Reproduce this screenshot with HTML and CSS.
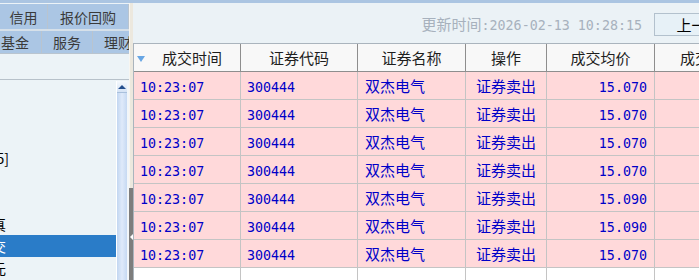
FILE: index.html
```html
<!DOCTYPE html>
<html lang="zh-CN">
<head>
    <meta charset="UTF-8">
    <title>当日成交</title>
    <link rel="stylesheet" href="styles.css">
</head>
<body>
<div id="topbar"></div>
<div id="container">
    <div id="sidebar">
        <div class="tabrow tabrow1">
            <span class="tab tab-credit">信用</span>
            <span class="tab tab-repo">报价回购</span>
        </div>
        <div class="tabrow tabrow2">
            <span class="tab">基金</span>
            <span class="tab">服务</span>
            <span class="tab">理财</span>
        </div>
        <div class="sidebar-gap"></div>
        <div id="treebox">
            <ul class="tree">
                <li><span class="label out">买入[F1]</span></li>
                <li><span class="label out">卖出[F2]</span></li>
                <li><span class="label out">撤单[F3]</span></li>
                <li><span class="label wide">新股申购[F5]</span></li>
                <li><span class="label out">资金股票</span></li>
                <li><span class="label out">当日委托</span></li>
                <li><span class="label">账户仿真</span></li>
                <li class="selected"><span class="label">当日成交</span></li>
                <li><span class="label">交易单元</span></li>
            </ul>
            <div class="vscroll"><span class="vscroll-up"></span></div>
        </div>
    </div>
    <div id="splitter">
        <div class="splitter-top"></div>
        <div class="splitter-handle"></div>
    </div>
    <div id="content">
        <div id="toolbar">
            <span class="updated">更新时间<span class="mono">:2026-02-13 10:28:15</span></span>
            <span class="btn">上一页</span>
        </div>
        <div class="gridwrap">
            <table class="grid">
                <thead>
                <tr>
                    <th class="w1"><span class="sort"></span>成交时间</th>
                    <th class="w2">证券代码</th>
                    <th class="w3">证券名称</th>
                    <th class="w4">操作</th>
                    <th class="w5">成交均价</th>
                    <th class="w6">成交数量</th>
                </tr>
                </thead>
                <tbody>
                <tr>
                    <td class="mono">10:23:07</td><td class="mono">300444</td><td class="name">双杰电气</td>
                    <td class="op">证券卖出</td><td class="mono num">15.070</td><td class="mono num">100</td>
                </tr>
                <tr>
                    <td class="mono">10:23:07</td><td class="mono">300444</td><td class="name">双杰电气</td>
                    <td class="op">证券卖出</td><td class="mono num">15.070</td><td class="mono num">100</td>
                </tr>
                <tr>
                    <td class="mono">10:23:07</td><td class="mono">300444</td><td class="name">双杰电气</td>
                    <td class="op">证券卖出</td><td class="mono num">15.070</td><td class="mono num">200</td>
                </tr>
                <tr>
                    <td class="mono">10:23:07</td><td class="mono">300444</td><td class="name">双杰电气</td>
                    <td class="op">证券卖出</td><td class="mono num">15.070</td><td class="mono num">100</td>
                </tr>
                <tr>
                    <td class="mono">10:23:07</td><td class="mono">300444</td><td class="name">双杰电气</td>
                    <td class="op">证券卖出</td><td class="mono num">15.090</td><td class="mono num">300</td>
                </tr>
                <tr>
                    <td class="mono">10:23:07</td><td class="mono">300444</td><td class="name">双杰电气</td>
                    <td class="op">证券卖出</td><td class="mono num">15.090</td><td class="mono num">100</td>
                </tr>
                <tr>
                    <td class="mono">10:23:07</td><td class="mono">300444</td><td class="name">双杰电气</td>
                    <td class="op">证券卖出</td><td class="mono num">15.070</td><td class="mono num">100</td>
                </tr>
                <tr class="blank">
                    <td></td><td></td><td></td><td></td><td></td><td></td>
                </tr>
                </tbody>
            </table>
        </div>
    </div>
</div>
</body>
</html>
```

FILE: styles.css
```css
* {
    box-sizing: border-box;
}

html, body {
    margin: 0;
    padding: 0;
}

body {
    width: 699px;
    height: 280px;
    overflow: hidden;
    background-color: #ecf3f7;
    font-family: "Noto Sans CJK SC", sans-serif;
    font-size: 14px;
    color: #000;
}

.mono {
    font-family: "DejaVu Sans Mono", monospace;
    font-size: 13.33px;
}

#topbar {
    height: 3px;
    background-color: #abc5e2;
}

#container {
    display: flex;
    height: 277px;
}

/* left menu */
#sidebar {
    width: 129px;
    flex: none;
    display: flex;
    flex-direction: column;
    overflow: hidden;
    background-color: #ecf3f7;
}

.tabrow {
    display: flex;
    flex: none;
    background-color: #abc6e4;
}

.tabrow1 {
    margin-top: 1px;
    height: 27px;
    border-bottom: 2px solid #d6e0e9;
}

.tabrow2 {
    height: 23px;
    margin-left: -11px;
    border-bottom: 1px solid #b9c4cf;
}

.tab {
    flex: none;
    width: 51px;
    display: flex;
    align-items: center;
    justify-content: center;
    border-right: 1px solid #b9c4cf;
    color: #3a3a3a;
}

.tabrow2 .tab:first-child {
    width: 53px;
}

.tab-credit {
    width: 48px;
}

.tab-repo {
    width: 81px;
}

.sidebar-gap {
    flex: none;
    height: 26px;
    border-bottom: 1px solid #b7c1ca;
}

#treebox {
    flex: 1;
    min-height: 0;
    display: flex;
}

.tree {
    list-style: none;
    margin: 0;
    padding: 1px 0 0;
    width: 116px;
    flex: none;
    overflow: hidden;
}

.tree li {
    height: 22px;
    display: flex;
    align-items: center;
}

.tree li.selected {
    background-color: #2a7cc8;
    color: #fff;
}

.label {
    flex: none;
    width: 6px;
    display: flex;
    justify-content: flex-end;
    white-space: nowrap;
}

.label.wide {
    width: 9px;
}

.label.out {
    width: 0;
}

.vscroll {
    width: 13px;
    flex: none;
    margin-top: 1px;
    border-left: 1px solid #fff;
    border-right: 2px solid #f2f6f9;
    background: linear-gradient(to right, #c2d6f1, #dfeafa 50%, #c6d9f2);
}

.vscroll-up {
    display: flex;
    align-items: center;
    justify-content: center;
    height: 12px;
    border-bottom: 1px solid #a9c0dc;
    background: linear-gradient(#f5f9fd, #d5e3f5);
}

.vscroll-up::before {
    content: "";
    border-left: 4px solid transparent;
    border-right: 4px solid transparent;
    border-bottom: 4px solid #244f8e;
}

#splitter {
    width: 4px;
    flex: none;
    display: flex;
    flex-direction: column;
}

.splitter-top {
    height: 185px;
    background-color: #ece8de;
    border-left: 1px solid #f7f5f0;
}

.splitter-handle {
    flex: 1;
    display: flex;
    justify-content: center;
    align-items: flex-start;
    padding-top: 46px;
    background-color: #7d7d7d;
}

.splitter-handle::before {
    content: "";
    border-top: 3px solid transparent;
    border-bottom: 3px solid transparent;
    border-right: 3px solid #fff;
}

/* right panel */
#content {
    flex: 1;
    min-width: 0;
    overflow: hidden;
    background-color: #ebf2f6;
}

#toolbar {
    height: 40px;
    display: flex;
    align-items: center;
    justify-content: flex-end;
    gap: 12px;
}

.updated {
    color: #a7b1bd;
    font-size: 15px;
}

.btn {
    flex: none;
    width: 90px;
    height: 23px;
    margin: 3px -45px 0 0;
    display: flex;
    align-items: center;
    justify-content: center;
    border: 1px solid #b3c1cd;
    background-color: #e7f1f7;
    font-size: 15px;
}

.gridwrap {
    width: 642px;
}

.grid {
    width: 642px;
    table-layout: fixed;
    border-collapse: separate;
    border-spacing: 0;
    border-top: 1px solid #aab4bd;
    border-left: 1px solid #aab4bd;
}

.grid th,
.grid td {
    height: 28px;
    padding: 0 6px;
    border-right: 1px solid #c4c4c4;
    border-bottom: 1px solid #c4c4c4;
    white-space: nowrap;
    overflow: hidden;
}

.grid th {
    background-color: #f8f8f8;
    border-right-color: #8e8e8e;
    border-bottom-color: #8e8e8e;
    font-weight: normal;
    font-size: 15px;
    color: #1e1e1e;
    text-align: center;
}

.grid th.w1 {
    text-align: left;
    padding-left: 3px;
}

.grid th.w6 {
    text-align: left;
    padding-left: 25px;
}

.w1 { width: 107px; }
.w2 { width: 117px; }
.w3 { width: 108px; }
.w4 { width: 81px; }
.w5 { width: 108px; }
.w6 { width: 120px; }

.sort {
    display: inline-block;
    vertical-align: middle;
    margin: 0 17px 2px 0;
    border-left: 4px solid transparent;
    border-right: 4px solid transparent;
    border-top: 6px solid #68a6e4;
}

.grid td {
    background-color: #ffd9da;
    color: #0000c8;
    font-size: 15px;
}

.grid td.mono {
    font-size: 13.33px;
    padding-top: 3px;
}

.grid td.name {
    padding-left: 7px;
}

.grid td.op {
    text-align: center;
}

.grid td.num {
    text-align: right;
    padding-right: 7px;
}

.grid tr.blank td {
    background-color: #fff;
}
```
